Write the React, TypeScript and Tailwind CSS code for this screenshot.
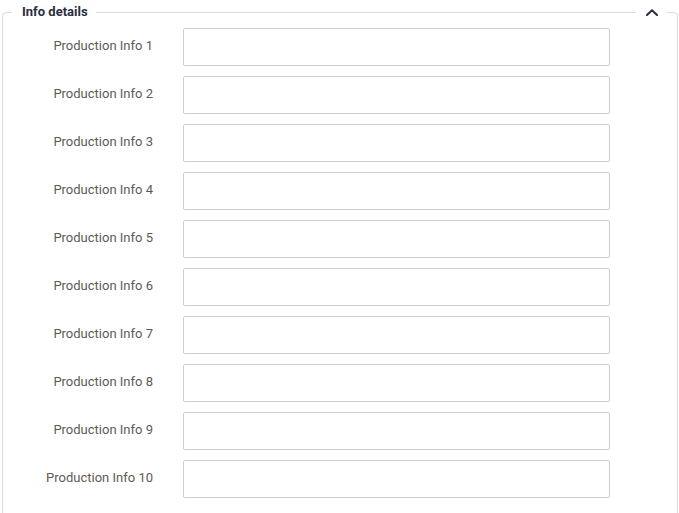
import React from 'react';

const rows = Array.from({ length: 10 }, (_, i) => `Production Info ${i + 1}`);

const ChevronUp = () => (
  <svg width="12" height="7" viewBox="0 0 12 7" fill="none">
    <path d="M1 6L6 1.2L11 6" stroke="#2b2d42" strokeWidth="2" strokeLinecap="round" strokeLinejoin="round" />
  </svg>
);

export default function App() {
  return (
    <div className="bg-white min-h-[513px] pl-[2px] pr-[1px] font-['Roboto',sans-serif]">
      <fieldset className="relative border border-[#dcdcdc] rounded-[4px] m-0 p-0 pb-[20px]">
        <legend className="ml-[9px] pl-[10px] pr-[8px] text-[13px] leading-[24px] font-bold text-[#2b2d42]">
          Info details
        </legend>
        <button
          type="button"
          className="absolute -top-[24px] right-[10px] w-[31px] h-[24px] bg-white flex items-center justify-center"
        >
          <ChevronUp />
        </button>
        <div className="flex flex-col gap-[10px] mt-[4px]">
          {rows.map((label) => (
            <div key={label} className="flex items-center">
              <label className="w-[150px] pb-[2px] text-right text-[13px] text-[#5f5a54]">{label}</label>
              <input
                type="text"
                className="ml-[30px] w-[427px] h-[38px] border border-[#cfcdd3] rounded-[2px] outline-none px-2 text-[13px]"
              />
            </div>
          ))}
        </div>
      </fieldset>
    </div>
  );
}
